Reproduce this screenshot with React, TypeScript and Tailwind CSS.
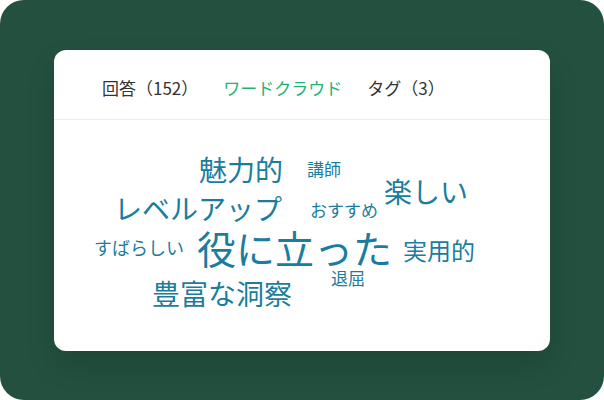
const FONT = { fontFamily: '"Noto Sans CJK JP", "Noto Sans", sans-serif' };

const TABS = [
  { label: "回答（152）", active: false },
  { label: "ワードクラウド", active: true },
  { label: "タグ（3）", active: false },
];

// word cloud: position on the canvas is the content
const WORDS = [
  { text: "魅力的", size: "text-[28px]", pos: "left-[145px] top-[35px]" },
  { text: "講師", size: "text-[17px]", pos: "left-[253px] top-[40px]" },
  { text: "楽しい", size: "text-[28px]", pos: "left-[330px] top-[57px]" },
  { text: "レベルアップ", size: "text-[28px]", pos: "left-[60px] top-[74px]" },
  { text: "おすすめ", size: "text-[17px]", pos: "left-[256px] top-[81px]" },
  { text: "すばらしい", size: "text-[18px]", pos: "left-[40px] top-[118px]" },
  { text: "役に立った", size: "text-[39px]", pos: "left-[143px] top-[108px]" },
  { text: "実用的", size: "text-[24px]", pos: "left-[349px] top-[118px]" },
  { text: "退屈", size: "text-[17px]", pos: "left-[277px] top-[149px]" },
  { text: "豊富な洞察", size: "text-[28px]", pos: "left-[98px] top-[159px]" },
];

export default function App() {
  return (
    <div className="h-[400px] w-[604px] bg-white" style={FONT}>
      <div className="h-full w-full rounded-3xl bg-[#23503f] px-[54px] pt-[50px]">
        <div className="h-[301px] w-[496px] overflow-hidden rounded-xl bg-white shadow-[0_14px_30px_rgba(0,0,0,0.12)]">
          <div className="flex h-[70px] gap-[25px] border-b border-[#ececec] pl-[48px] pt-[29px]">
            {TABS.map((t) => (
              <div
                key={t.label}
                className={
                  "text-[17px] leading-none " +
                  (t.active ? "text-[#1fb376]" : "text-[#333333]")
                }
              >
                {t.label}
              </div>
            ))}
          </div>
          <div className="relative h-[231px]">
            {WORDS.map((w) => (
              <span
                key={w.text}
                className={"absolute whitespace-nowrap leading-none text-[#1a7d9e] " + w.size + " " + w.pos}
              >
                {w.text}
              </span>
            ))}
          </div>
        </div>
      </div>
    </div>
  );
}
